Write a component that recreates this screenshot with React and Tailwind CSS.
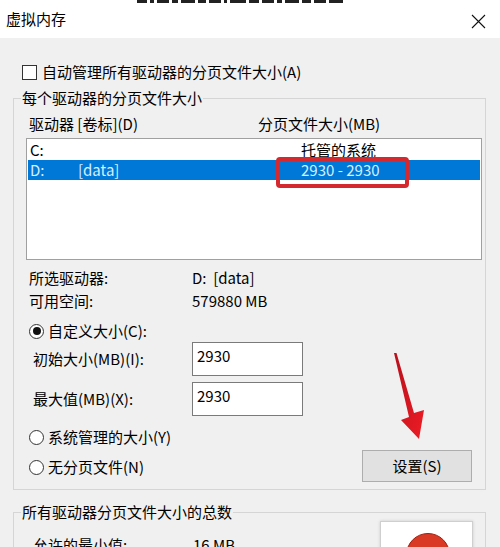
import React from "react";

function Radio({ checked, label }) {
  return (
    <div className="ml-[15px] flex h-[20px] items-center">
      <span className="flex h-[15px] w-[15px] items-center justify-center rounded-full border border-[#333] bg-white">
        {checked && <span className="h-[8px] w-[8px] rounded-full bg-[#111]" />}
      </span>
      <span className="ml-[4px]">{label}</span>
    </div>
  );
}

function SizeInput({ label, value, className }) {
  return (
    <div className={"ml-[19px] flex items-center " + className}>
      <span className="w-[159px]">{label}</span>
      <div className="h-[34px] w-[111px] border border-[#7a7a7a] bg-white pl-[4px] pt-[3px]">
        {value}
      </div>
    </div>
  );
}

const fragment = [10, 4, 12, 6, 14, 8, 12, 3, 16, 10, 12, 5, 14, 9, 12, 14];

export default function App() {
  return (
    <div className="relative h-[547px] w-[500px] overflow-hidden bg-[#f0f0f0] font-['Noto_Sans_CJK_SC','Liberation_Sans',sans-serif] text-[15px] leading-[20px] text-black">
      {/* 标题栏 */}
      <div className="relative flex h-[38px] items-center bg-white pl-[6px]">
        {/* 后面窗口露出的一点边 */}
        <div className="absolute left-[137px] top-0 flex h-[4px] items-start gap-[3px]">
          {fragment.map((w, i) => (
            <span key={i} className="h-[3px] bg-[#222]" style={{ width: w }} />
          ))}
        </div>
        <span>虚拟内存</span>
        <svg className="absolute left-[471px] top-[14px]" width="15" height="15" viewBox="0 0 15 15">
          <path d="M1 1 L14 14 M14 1 L1 14" stroke="#111" strokeWidth="1.1" fill="none" />
        </svg>
      </div>

      <div className="pt-[24px]">
        <div className="flex h-[20px] items-center pl-[22px]">
          <span className="h-[15px] w-[15px] border border-[#333] bg-white" />
          <span className="ml-[5px]">自动管理所有驱动器的分页文件大小(A)</span>
        </div>

        {/* 每个驱动器 */}
        <fieldset className="ml-[13px] mt-[6px] w-[473px] border border-[#d5d5d5] pb-[7px]">
          <legend className="ml-[7px] px-[1px] leading-[20px]">每个驱动器的分页文件大小</legend>

          <div className="ml-[15px] mt-[6px] flex h-[20px]">
            <span className="w-[229px]">驱动器 [卷标](D)</span>
            <span>分页文件大小(MB)</span>
          </div>

          <div className="relative ml-[12px] mt-[4px] h-[122px] w-[456px] border border-[#a0a0a0] bg-white pt-[1px]">
            <div className="mx-[1px] grid h-[20px] grid-cols-[271px_1fr] pl-[2px]">
              <span>C:</span>
              <span>托管的系统</span>
            </div>
            <div className="mx-[1px] grid h-[20px] grid-cols-[271px_1fr] bg-[#0078d7] pl-[2px] text-[#d4f0ff]">
              <div className="flex">
                <span className="w-[48px]">D:</span>
                <span>[data]</span>
              </div>
              <span>2930 - 2930</span>
            </div>
            <div className="absolute left-[249px] top-[18px] h-[31px] w-[133px] rounded-[4px] border-[4px] border-[#d42a2f]" />
          </div>

          <div className="ml-[15px] mt-[8px] flex h-[20px]">
            <span className="w-[163px]">所选驱动器:</span>
            <span>D:&nbsp;&nbsp;[data]</span>
          </div>
          <div className="ml-[15px] mt-[3px] flex h-[20px]">
            <span className="w-[163px]">可用空间:</span>
            <span>579880 MB</span>
          </div>

          <div className="mt-[10px]">
            <Radio checked label="自定义大小(C):" />
          </div>
          <SizeInput className="mt-[1px]" label="初始大小(MB)(I):" value="2930" />
          <SizeInput className="mt-[6px]" label="最大值(MB)(X):" value="2930" />

          <div className="flex justify-between">
            <div className="flex flex-col">
              <div className="mt-[11px]">
                <Radio label="系统管理的大小(Y)" />
              </div>
              <div className="mt-[10px]">
                <Radio label="无分页文件(N)" />
              </div>
            </div>
            <button className="mr-[13px] mt-[34px] h-[32px] w-[110px] border border-[#adadad] bg-[#e1e1e1]">
              设置(S)
            </button>
          </div>
        </fieldset>

        {/* 总数 */}
        <fieldset className="ml-[13px] mt-[12px] h-[80px] w-[473px] border border-[#d5d5d5]">
          <legend className="ml-[7px] px-[1px] leading-[20px]">所有驱动器分页文件大小的总数</legend>
          <div className="ml-[19px] mt-[13px] flex h-[20px]">
            <span className="w-[160px]">允许的最小值:</span>
            <span>16 MB</span>
          </div>
        </fieldset>
      </div>

      {/* 红色箭头 */}
      <svg className="absolute left-[390px] top-[350px]" width="40" height="95" viewBox="0 0 40 95">
        <defs>
          <linearGradient id="ar" x1="0" y1="0" x2="1" y2="1">
            <stop offset="0" stopColor="#b8101c" />
            <stop offset="1" stopColor="#ee1c24" />
          </linearGradient>
        </defs>
        <path d="M4 3 L6.5 3 L24 63 L34 60 L29 89 L11 70 L19 67 Z" fill="url(#ar)" />
      </svg>

      {/* 右下角 */}
      <div className="absolute left-[380px] top-[521px] h-[40px] w-[93px] overflow-hidden border border-[#cfcfcf] bg-white shadow-[0_0_3px_rgba(0,0,0,0.15)]">
        <div className="ml-[25px] mt-[11px] h-[44px] w-[44px] rounded-full border border-[#a02010] bg-[#d93a26]" />
      </div>
    </div>
  );
}
